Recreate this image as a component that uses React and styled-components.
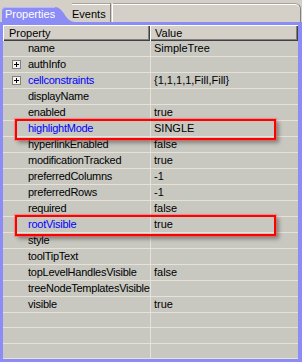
import React from "react";
import styled, { createGlobalStyle } from "styled-components";

const GlobalStyle = createGlobalStyle`
  html, body { margin: 0; padding: 0; background: #d4d0c8; }
  body { font-family: "Liberation Sans", Arial, sans-serif; font-size: 11px; }
`;

const BLUE = "#8c8cf6";

const Frame = styled.div`
  width: 302px;
  height: 362px;
  background: #d4d0c8;
  display: flex;
  flex-direction: column;
  overflow: hidden;
`;

const TabStrip = styled.div`
  height: 22px;
  display: flex;
  align-items: flex-end;
  padding-right: 1px;
`;

const ActiveTab = styled.div`
  position: relative;
  height: 15px;
  margin-left: 2px;
  width: 50px;
  padding-left: 3px;
  background: ${BLUE};
  border-top-left-radius: 4px;
  color: #fff;
  line-height: 14px;
  box-shadow: inset 0 1px #b8b8ff;
  &::after {
    content: "";
    position: absolute;
    left: 100%;
    top: 0;
    width: 20px;
    height: 15px;
    background: ${BLUE};
    clip-path: path("M0 0 C 9 0, 10 15, 20 15 L 0 15 Z");
  }
`;

const Tab = styled.div`
  height: 18px;
  margin-left: 17px;
  padding: 0 3px 0 0;
  width: 35px;
  line-height: 20px;
  color: #000;
  border-top: 1px solid #a6a39c;
  box-shadow: inset 0 1px #fff;
  border-right: 1px solid #808080;
`;

const TabFill = styled.div`
  flex: 1;
  height: 18px;
  margin-left: 1px;
  border-top: 1px solid #a6a39c;
  border-left: 1px solid #fff;
  border-right: 1px solid #808080;
  border-top-right-radius: 6px;
  box-shadow: inset 0 1px #fff;
`;

const Panel = styled.div`
  flex: 1;
  border: 3px solid ${BLUE};
  border-right-width: 4px;
  display: flex;
  flex-direction: column;
  overflow: hidden;
`;

const Grid = styled.div`
  display: grid;
  grid-template-columns: 147px 1fr;
`;

const HeaderCell = styled.div`
  height: 16px;
  box-sizing: border-box;
  padding-left: ${p => p.$pad}px;
  line-height: 16px;
  background: #d4d0c8;
  box-shadow: inset 1px 1px #fff, inset -1px -1px #404040, inset -2px -2px #808080;
`;

const Row = styled(Grid)`
  position: relative;
  height: 16px;
  box-sizing: border-box;
  background: #c8c8c0;
  border-bottom: 1px solid #e6e2da;
  line-height: 15px;
  ${p =>
    p.$marked &&
    `
    &::after {
      content: "";
      position: absolute;
      z-index: 2;
      left: 12px;
      width: 257px;
      top: -2px;
      height: 17px;
      border: 2px solid #ff0000;
      box-shadow: 0 0 1px 1px rgba(255, 90, 90, 0.45), 3px 3px 4px rgba(0, 0, 0, 0.35);
      pointer-events: none;
    }
  `}
`;

const NameCell = styled.div`
  display: flex;
  align-items: center;
  gap: 7px;
  padding-left: 9px;
  white-space: nowrap;
  overflow: hidden;
  letter-spacing: -0.25px;
  color: ${p => (p.$blue ? "#0000ff" : "#000")};
`;

const ValueCell = styled.div`
  border-left: 1px solid #e6e2da;
  padding-left: 3px;
  white-space: nowrap;
  overflow: hidden;
`;

const Expander = styled.span`
  flex: none;
  width: 9px;
  height: 9px;
  box-sizing: border-box;
  border: 1px solid ${p => (p.$show ? "#808080" : "transparent")};
  background: ${p => (p.$show ? "#f4f4f0" : "transparent")};
  position: relative;
  ${p =>
    p.$show &&
    `
    &::before { content: ""; position: absolute; left: 1px; top: 3px; width: 5px; height: 1px; background: #000; }
    &::after { content: ""; position: absolute; left: 3px; top: 1px; width: 1px; height: 5px; background: #000; }
  `}
`;

const rows = [
  { name: "name", value: "SimpleTree" },
  { name: "authInfo", expand: true },
  { name: "cellconstraints", expand: true, blue: true, value: "{1,1,1,1,Fill,Fill}" },
  { name: "displayName" },
  { name: "enabled", value: "true" },
  { name: "highlightMode", blue: true, value: "SINGLE", marked: true },
  { name: "hyperlinkEnabled", value: "false" },
  { name: "modificationTracked", value: "true" },
  { name: "preferredColumns", value: "-1" },
  { name: "preferredRows", value: "-1" },
  { name: "required", value: "false" },
  { name: "rootVisible", blue: true, value: "true", marked: true },
  { name: "style" },
  { name: "toolTipText" },
  { name: "topLevelHandlesVisible", value: "false" },
  { name: "treeNodeTemplatesVisible" },
  { name: "visible", value: "true" },
  {},
  {},
  {},
];

export default function App() {
  return (
    <Frame>
      <GlobalStyle />
      <TabStrip>
        <ActiveTab>Properties</ActiveTab>
        <Tab>Events</Tab>
        <TabFill />
      </TabStrip>
      <Panel>
        <Grid>
          <HeaderCell $pad={6}>Property</HeaderCell>
          <HeaderCell $pad={5}>Value</HeaderCell>
        </Grid>
        {rows.map((r, i) => (
          <Row key={i} $marked={r.marked}>
            <NameCell $blue={r.blue}>
              <Expander $show={r.expand} />
              {r.name}
            </NameCell>
            <ValueCell>{r.value}</ValueCell>
          </Row>
        ))}
      </Panel>
    </Frame>
  );
}
